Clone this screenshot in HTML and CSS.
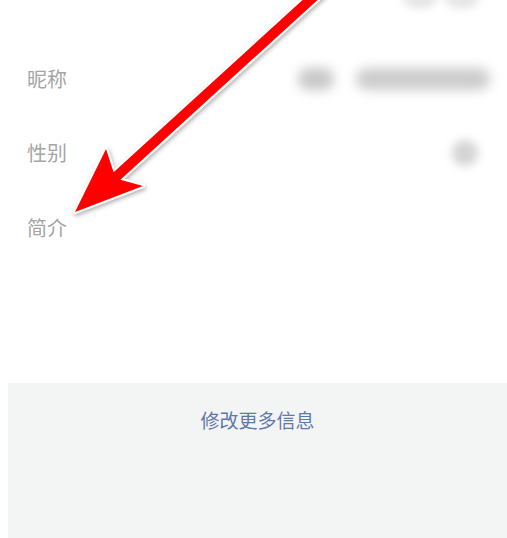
FILE: index.html
```html
<!DOCTYPE html>
<html>
<head>
    <meta charset="utf-8">
    <title>个人资料</title>
    <link rel="stylesheet" href="styles.css">
</head>
<body>
    <div id="page">
        <div class="avatar-row">
            <span class="avatar-blur"></span>
            <span class="avatar-blur"></span>
        </div>

        <div class="info-list">
            <div class="info-row">
                <span class="info-label">昵称</span>
                <div class="nick-blur">
                    <span class="nick-icon"></span>
                    <span class="nick-text"></span>
                </div>
            </div>
            <div class="info-row">
                <span class="info-label">性别</span>
                <span class="gender-blur"></span>
            </div>
            <div class="info-row">
                <span class="info-label">简介</span>
            </div>
        </div>

        <div class="more-panel">
            <a class="more-link" href="#">修改更多信息</a>
        </div>

        <!-- 标注箭头：先画白边，再画红色 -->
        <svg class="mark-arrow" width="340" height="230" viewBox="0 0 340 230">
            <polygon points="75,212 106,149 113.6,172.3 319.8,-15.7 326.6,-8.3 120.4,179.7 143,186"
                     fill="#ffffff" stroke="#ffffff" stroke-width="4.5" stroke-linejoin="round"/>
            <polygon points="75,212 106,149 113.6,172.3 319.8,-15.7 326.6,-8.3 120.4,179.7 143,186"
                     fill="#ff0000"/>
        </svg>
    </div>
</body>
</html>
```

FILE: styles.css
```css
html, body {
  margin: 0;
  padding: 0;
  background-color: #fff;
}

#page {
  position: relative;
  width: 507px;
  height: 538px;
  overflow: hidden;
  font-family: "Noto Sans CJK SC", "Noto Sans", sans-serif;
}

.avatar-row {
  height: 41px;
  display: flex;
  justify-content: flex-end;
  gap: 6px;
  padding-right: 27px;
}

.avatar-blur {
  width: 36px;
  height: 14px;
  margin-top: -6px;
  border-radius: 0 0 18px 18px;
  background-color: #e4e4e4;
  filter: blur(4px);
}

.info-list {
  display: flex;
  flex-direction: column;
  margin-top: 0.5px;
}

.info-row {
  height: 74.5px;
  display: flex;
  align-items: center;
  justify-content: space-between;
  padding: 0 28px 0 27px;
}

.info-label {
  font-size: 20px;
  line-height: 26px;
  color: #a5a5a5;
}

.nick-blur {
  display: flex;
  align-items: center;
  gap: 22px;
  margin-right: -11px;
  filter: blur(6px);
}

.nick-icon {
  width: 36px;
  height: 22px;
  border-radius: 11px;
  background-color: #c8c8c8;
}

.nick-text {
  width: 134px;
  height: 22px;
  border-radius: 11px;
  background-color: #cccccc;
}

.gender-blur {
  width: 26px;
  height: 26px;
  border-radius: 50%;
  background-color: #d4d4d4;
  margin-right: 1px;
  filter: blur(5px);
}

.more-panel {
  margin: 118px 0 0 8px;
  height: 160px;
  background-color: #f3f4f4;
  display: flex;
  justify-content: center;
  padding-top: 24px;
  box-sizing: border-box;
}

.more-link {
  font-size: 19px;
  line-height: 26px;
  height: 26px;
  color: #5f78aa;
  text-decoration: none;
}

.mark-arrow {
  position: absolute;
  left: 0;
  top: 0;
  overflow: visible;
  filter: drop-shadow(1px 2px 2px rgba(0, 0, 0, 0.3));
}
```
